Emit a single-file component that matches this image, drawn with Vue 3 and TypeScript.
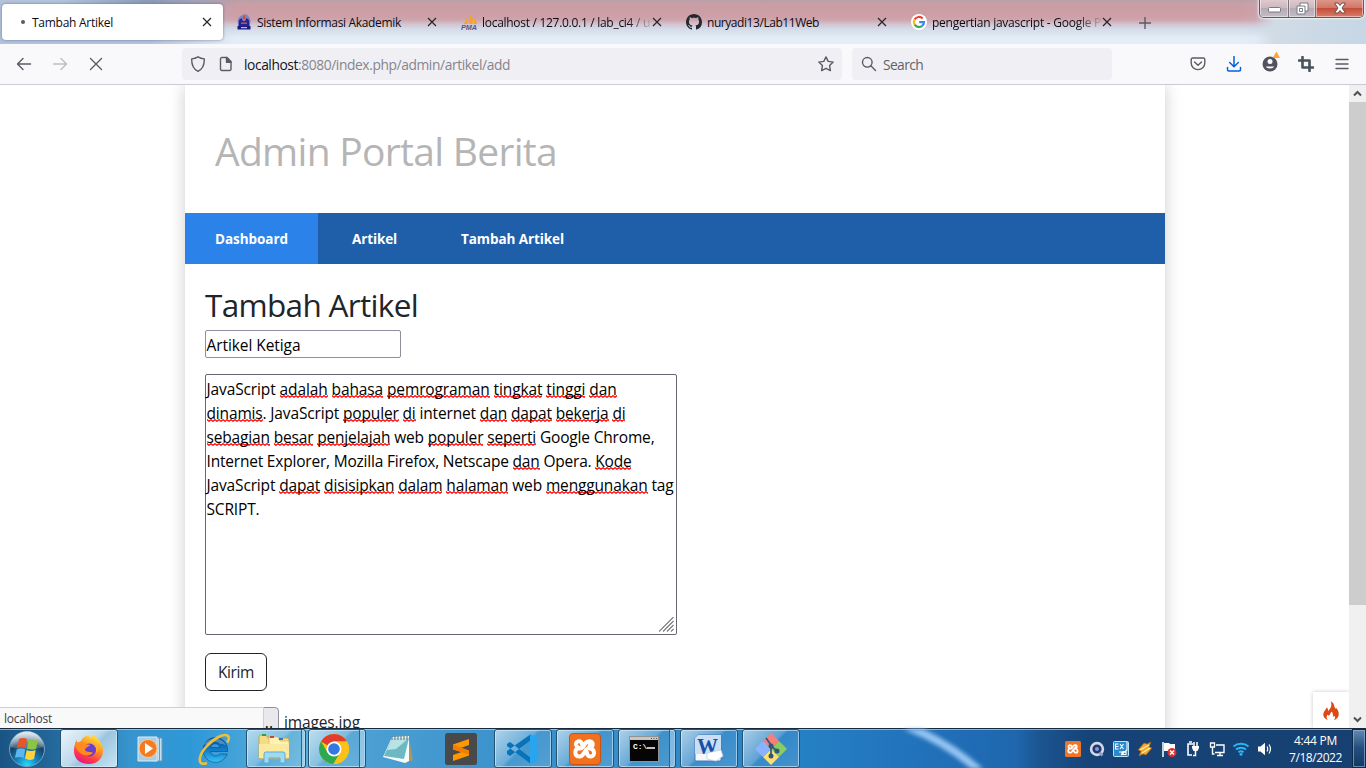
<script setup lang="ts">
import type { Directive } from 'vue'

interface Tab { id: string; title: string; width: number; fade?: boolean }
interface Piece { t: string; bad?: boolean }

const tabs: Tab[] = [
  { id: 'load', title: 'Tambah Artikel', width: 81 },
  { id: 'univ', title: 'Sistem Informasi Akademik', width: 144 },
  { id: 'pma', title: 'localhost / 127.0.0.1 / lab_ci4 / u', width: 168, fade: true },
  { id: 'github', title: 'nuryadi13/Lab11Web', width: 112 },
  { id: 'google', title: 'pengertian javascript - Google P', width: 169, fade: true },
]

const menu = [
  { label: 'Dashboard', width: 73 },
  { label: 'Artikel', width: 45 },
  { label: 'Tambah Artikel', width: 103 },
]

// Words between asterisks carry a spelling mark.
const parse = (line: string): Piece[] =>
  line.split('*').map((t, i) => ({ t, bad: i % 2 === 1 })).filter((p) => p.t !== '')

const lines = [
  { width: 410, text: 'JavaScript *adalah* *bahasa* *pemrograman* *tingkat* *tinggi* *dan*' },
  { width: 419, text: '*dinamis*. JavaScript *populer* *di* internet *dan* *dapat* *bekerja* *di*' },
  { width: 448, text: '*sebagian* *besar* *penjelajah* web *populer* *seperti* Google Chrome,' },
  { width: 425, text: 'Internet Explorer, Mozilla Firefox, Netscape *dan* Opera. *Kode*' },
  { width: 467, text: 'JavaScript *dapat* *disisipkan* *dalam* *halaman* web *menggunakan* tag' },
  { width: 53, text: 'SCRIPT.' },
].map((l) => ({ width: l.width, pieces: parse(l.text) }))

// Tracks text out so that it spans the given number of pixels.
const vFit: Directive<HTMLElement, number> = {
  mounted(el, { value }) {
    const n = (el.textContent ?? '').length
    el.style.letterSpacing = `${(value - el.getBoundingClientRect().width) / n}px`
  },
}
</script>

<template>
  <div class="screen">
    <header class="tabstrip">
      <div v-for="(tab, i) in tabs" :key="tab.id" class="tab" :class="{ active: i === 0 }">
        <div class="favicon">
          <i v-if="tab.id === 'load'" class="dot"></i>
          <svg v-else-if="tab.id === 'univ'" width="16" height="16" viewBox="0 0 16 16">
            <path d="M1.500 8C1.500 3 5 1.500 8 .5s6.500 2.500 6.500 7.500L13 13H3z" fill="#7d86c4" />
            <path d="M8 .5l1.500 3L8 6 6.500 3.500z" fill="#e2462e" />
            <path d="M3 6l2.500-2 1.300 3h2.400l1.300-3L13 6l.5 6h-11z" fill="#24248c" />
            <path d="M5 8.500h6v1.300H5z" fill="#d65b5b" />
            <path d="M1.500 12h13v3.500h-13z" fill="#1b1b84" /><path d="M5 13.200h6v1H5z" fill="#dfe1f6" />
          </svg>
          <svg v-else-if="tab.id === 'pma'" width="18" height="16" viewBox="0 0 18 16">
            <path d="M2 10c2.500-2 3.500-4 4-7 1.500 2 1.500 5 .5 7zM7.500 10C8.700 6.500 9 3 8.300.3c3.500 2 4.500 6 3.200 9.700zM12.500 10c.7-2 .7-3.500.3-5.500 2 1 3 3.500 3.200 5.500z" fill="#f8a12f" />
            <text x="0" y="15.500" class="pma-text" textLength="16" lengthAdjust="spacingAndGlyphs">PMA</text>
          </svg>
          <svg v-else-if="tab.id === 'github'" width="16" height="16" viewBox="0 0 16 16">
            <path fill="#24292f" d="M8 0C3.580 0 0 3.580 0 8c0 3.540 2.290 6.530 5.470 7.590.4.070.55-.17.55-.38 0-.19-.01-.82-.01-1.490-2.010.37-2.530-.49-2.690-.94-.09-.23-.48-.94-.82-1.130-.28-.15-.68-.52-.01-.53.63-.01 1.080.58 1.230.82.72 1.210 1.870.87 2.330.66.070-.52.28-.87.51-1.070-1.780-.2-3.640-.89-3.640-3.950 0-.87.31-1.590.82-2.150-.08-.2-.36-1.020.08-2.120 0 0 .67-.21 2.200.82.64-.18 1.320-.27 2-.27s1.360.09 2 .27c1.530-1.040 2.200-.82 2.200-.82.44 1.100.16 1.920.08 2.120.51.56.82 1.270.82 2.150 0 3.070-1.870 3.750-3.650 3.950.29.25.54.73.54 1.480 0 1.070-.01 1.930-.01 2.200 0 .21.15.46.55.38A8.010 8.010 0 0 0 16 8c0-4.420-3.580-8-8-8z" />
          </svg>
          <svg v-else width="16" height="16" viewBox="0 0 16 16">
            <circle cx="8" cy="8" r="8" fill="#fff" />
            <g fill="none" stroke-width="2.200">
              <path d="M3.700 5.400A5 5 0 0 1 11.700 4.600" stroke="#ea4335" />
              <path d="M3.700 5.400a5 5 0 0 0 0 5.200" stroke="#fbbc05" />
              <path d="M3.700 10.600a5 5 0 0 0 7.600 1.100" stroke="#34a853" />
              <path d="M11.300 11.700A5 5 0 0 0 13 8.100H8.200" stroke="#4285f4" />
            </g>
          </svg>
        </div>
        <div class="tab-title" :class="{ fade: tab.fade }"><span v-fit="tab.width">{{ tab.title }}</span></div>
        <svg class="close" width="10" height="10" viewBox="0 0 10 10"><path d="M1 1l8 8M9 1L1 9" /></svg>
      </div>
      <svg class="plus" width="12" height="12" viewBox="0 0 12 12"><path d="M6 0v12M0 6h12" /></svg>
      <div class="winbuttons">
        <div class="wb wb-min"><svg width="13" height="6"><rect x=".5" y=".5" width="12" height="4.500" rx="1" fill="#fff" stroke="#777b86" /></svg></div>
        <div class="wb wb-max">
          <svg width="13" height="13"><path d="M4 1h8v8h-3v3H1V4h3z" fill="#fff" stroke="#777b86" /><path d="M3.500 6.500h3v3h-3zM4 4h5v5" fill="none" stroke="#777b86" /></svg>
        </div>
        <div class="wb wb-close">
          <svg width="14" height="12" viewBox="0 0 14 12"><path d="M1.500 1h3.500l2 2.500L9 1h3.500L9 6l3.500 5H9L7 8.500 5 11H1.500L5 6z" fill="#fff" stroke="#684d50" /></svg>
        </div>
      </div>
    </header>

    <div class="toolbar">
      <div class="navbtns">
        <svg width="16" height="16" viewBox="0 0 16 16"><path d="M14.500 8H2M7 2.500L1.500 8 7 13.500" /></svg>
        <svg class="off" width="16" height="16" viewBox="0 0 16 16"><path d="M1.500 8H14M9 2.500L14.500 8 9 13.500" /></svg>
        <svg width="16" height="16" viewBox="0 0 16 16"><path d="M2.500 2.500l11 11M13.500 2.500l-11 11" /></svg>
      </div>
      <div class="urlbar">
        <svg width="16" height="16" viewBox="0 0 16 16"><path d="M8 .8c2 1.200 4 1.800 6.300 2.100C14.500 8.500 13 13 8 15.300 3 13 1.500 8.500 1.700 2.900 4 2.600 6 2 8 .8z" /></svg>
        <svg class="doc" width="16" height="16" viewBox="0 0 16 16"><path d="M3.800 1.500H9l4 4v7.700a1.300 1.300 0 0 1-1.300 1.300H3.800a1.300 1.300 0 0 1-1.300-1.300V2.800a1.300 1.300 0 0 1 1.300-1.300z" /><path d="M8.500 1.500v4.700H13z" fill="#5b5b66" /></svg>
        <span class="url"><span v-fit="54" class="host">localhost</span><span v-fit="212">:8080/index.php/admin/artikel/add</span></span>
        <svg class="star" width="16" height="16" viewBox="0 0 16 16"><path d="M8 .9l2.200 4.500 5 .7-3.600 3.500.8 5L8 12.300l-4.400 2.300.8-5L.8 6.100l5-.7z" /></svg>
      </div>
      <div class="search">
        <svg width="16" height="16" viewBox="0 0 16 16"><circle cx="6.300" cy="6.300" r="4.800" /><path d="M9.800 9.800l4.700 4.700" /></svg>
        <span v-fit="40">Search</span>
      </div>
      <div class="tools">
        <svg width="16" height="16" viewBox="0 0 16 16"><path d="M2.500 2h11A1.300 1.300 0 0 1 14.800 3.300v4a6.800 6.300 0 0 1-13.600 0v-4A1.300 1.300 0 0 1 2.500 2zM4.500 6L8 9.200 11.500 6" /></svg>
        <svg class="blue" width="16" height="16" viewBox="0 0 16 16"><path d="M8 .5v10M3.700 6.500L8 10.700l4.300-4.200M1.500 11.500v2a1.500 1.500 0 0 0 1.500 1.500h10a1.500 1.500 0 0 0 1.500-1.500v-2" /></svg>
        <svg width="20" height="22" viewBox="0 0 20 22"><circle cx="10" cy="13" r="7.500" fill="#52525e" stroke="none" /><circle cx="10" cy="10.500" r="2.500" fill="#f9f9fb" stroke="none" /><path d="M5.800 15.500h8.400c-1 2.500-7.400 2.500-8.400 0z" fill="#f9f9fb" stroke="none" /><path d="M16.500 .5l3.500 6.500h-7.500z" fill="#ffa436" stroke="none" /></svg>
        <svg width="16" height="16" viewBox="0 0 16 16"><path d="M4.500 1v10.500h10.500M1 4.500h10.500v10.500" stroke="#46535d" stroke-width="2.600" /></svg>
        <svg width="16" height="16" viewBox="0 0 16 16"><path d="M2 3.500h12M2 8h12M2 12.500h12" /></svg>
      </div>
    </div>

    <div class="viewport">
      <main class="page">
        <div class="page-head"><h1><span v-fit="342">Admin Portal Berita</span></h1></div>
        <nav class="menu">
          <a v-for="(m, i) in menu" :key="m.label" :class="{ on: i === 0 }"><span v-fit="m.width">{{ m.label }}</span></a>
        </nav>
        <section class="form">
          <h2><span v-fit="213">Tambah Artikel</span></h2>
          <div class="field"><span v-fit="94">Artikel Ketiga</span></div>
          <div class="area">
            <div v-for="(l, i) in lines" :key="i" class="line"><span v-fit="l.width"><span v-for="(p, j) in l.pieces" :key="j" :class="{ bad: p.bad }">{{ p.t }}</span></span></div>
            <svg class="grip" width="15" height="15" viewBox="0 0 15 15"><path d="M0 14.500L14.500 0M4 14.500L14.500 4M8 14.500L14.500 8M12 14.500l2.500-2.500" /></svg>
          </div>
          <button class="send"><span v-fit="36">Kirim</span></button>
          <div class="file"><span class="browse">Browse...</span><span v-fit="76">images.jpg</span></div>
        </section>
      </main>
      <div class="scroll">
        <svg width="17" height="17" viewBox="0 0 17 17"><path d="M5 10.500L8.500 7l3.500 3.500" /></svg>
        <div class="thumb"></div>
        <svg width="17" height="17" viewBox="0 0 17 17"><path d="M5 6.500L8.500 10 12 6.500" /></svg>
      </div>
      <div class="flame">
        <svg width="16" height="20" viewBox="0 0 16 20"><path fill="#dd4814" d="M5 19.300C1.500 18 0 15.500.3 13 .7 10 3 9 3.700 6.600c1.300 1 1.500 2.300 1.200 3.600C7.500 7.500 9.500 4.500 7.700.3c3.700 1.700 3.300 4.500 4.300 7 .4.700 1 .2.800-.8 2.700 2.800 4 6.500 2 9.800-.8 1.400-2.300 2.500-4 3 1.500-1.500 1.800-3 .8-4.500-.3.800-.9 1-1.500.8.400-2-1-3.200-.9-5.100C6.700 11.500 8 13.500 6 14.500c-.8.300-1.300-.3-1.400-1-1.300 1.800-1.300 4 .4 5.800z" /></svg>
      </div>
      <div class="status"><span v-fit="48">localhost</span></div>
    </div>

    <footer class="taskbar">
      <svg class="sweep" width="120" height="40" viewBox="0 0 120 40"><path d="M8 -3Q52 14 86 46" /></svg>
      <div class="slot start">
        <svg width="38" height="38" viewBox="0 0 38 38">
          <defs>
            <radialGradient id="orb" cx=".5" cy=".95" r=".9"><stop offset="0" stop-color="#22dcff" /><stop offset=".35" stop-color="#1680bb" /><stop offset=".7" stop-color="#16405f" /><stop offset="1" stop-color="#8eaabf" /></radialGradient>
            <linearGradient id="gloss" x1="0" y1="0" x2="0" y2="1"><stop offset="0" stop-color="#fff" stop-opacity=".75" /><stop offset="1" stop-color="#fff" stop-opacity=".12" /></linearGradient>
          </defs>
          <circle cx="19" cy="19" r="17.500" fill="url(#orb)" stroke="#6fa5c6" />
          <path d="M2.500 17a16.500 15.500 0 0 1 33 0q-16 5-33 0z" fill="url(#gloss)" />
          <path d="M11 9q4-2 8 0l-1.500 9q-4-2-8.500 0z" fill="#e8552a" />
          <path d="M20.500 9.500q4 2 9.500 0L28 19q-5 1.500-9-.5z" fill="#8cc63f" />
          <path d="M8.700 19.500q4-2 8.500 0l-1.700 8.500q-4-2-8.500 0z" fill="#5cb7f0" />
          <path d="M18.700 20q4 2 9 0L26 29q-5 2-9-.5z" fill="#ffd13b" />
        </svg>
      </div>
      <div class="slot task lit">
        <svg width="32" height="32" viewBox="0 0 32 32">
          <defs><linearGradient id="fox" x1=".8" y1="0" x2=".3" y2="1"><stop offset="0" stop-color="#fff14a" /><stop offset=".4" stop-color="#ff9a22" /><stop offset=".75" stop-color="#ff3b4b" /><stop offset="1" stop-color="#e31587" /></linearGradient></defs>
          <path d="M3.500 7l1 3 3-1.500c2-4 5-6 8-6l2.500 3C19 3 19.500 1.500 20 1c2 3 6 5 8 9 5 8 1 21-12 21C5 31 1 24 1 18c0-4 1-8 2.500-11z" fill="url(#fox)" />
          <circle cx="16.500" cy="17" r="6.500" fill="#6a3fd0" />
          <path d="M2 12c3-4 7-4 10-1 2 .5 4 .3 5 1-1 2-5 2-5 5 2 3 6 1 8 3-5 5-15 2-18-8z" fill="#ff8a1f" />
          <path d="M21 11c2 2 3 5 2 9 4-3 3-9-2-9z" fill="#ffb02c" />
        </svg>
      </div>
      <div class="slot wide player">
        <svg width="30" height="26" viewBox="0 0 30 26"><path d="M16 2h9v23h-9z" fill="#c4e0ef" stroke="#6f9cb8" /><path d="M20 2v23M22.500 2v23" stroke="#6f9cb8" /><path d="M1 1h19v24H1z" fill="#a8cee3" stroke="#dcedf6" /><circle cx="11" cy="12.500" r="9" fill="#f47b20" stroke="#ffc894" /><path d="M8 7l8 5.500L8 18z" fill="#fff" /></svg>
      </div>
      <div class="slot wide">
        <svg width="34" height="32" viewBox="0 0 34 32">
          <defs><linearGradient id="ie" x1="0" y1="0" x2="0" y2="1"><stop offset="0" stop-color="#0a4f95" /><stop offset=".5" stop-color="#0f7dcb" /><stop offset="1" stop-color="#36c5f7" /></linearGradient></defs>
          <path d="M18 4.500a12.500 12.500 0 1 0 12.300 16.500h-7.300c-2.500 3.500-9 2.500-9.500-2.500h17.200C31 10.500 26 4.500 18 4.500zM13.600 14.500c1-5 8.400-5 9.200 0z" fill="url(#ie)" stroke="#0b4a85" stroke-width=".6" />
          <path d="M7 12c2-4 6-6.500 11-6.500 5 0 9 2.500 11 7-2-1.500-4-2-6-1.500-2-3-7-3-9 0-2 0-5 0-7 1z" fill="#fff" opacity=".28" />
          <path d="M10 30C0 34 1 23 9 14 17 5 27 0 31 3c1.500 1.500.8 4-.8 6.500" fill="none" stroke="#f4bd33" stroke-width="2.600" />
        </svg>
      </div>
      <div class="slot task stack two">
        <svg width="34" height="32" viewBox="0 0 34 32"><path d="M2 4q0-2 2-2h5l2 3h19q2 0 2 2v17q0 2-2 2H4q-2 0-2-2z" fill="#f4dc83" stroke="#c3a54d" /><path d="M12 4h9l2 4h9v4H12z" fill="#fff2b5" stroke="#d1b764" stroke-width=".7" /><path d="M2 11h30v14H2z" fill="#fbe9a0" /><path d="M5 1h4v2H5z" fill="#22a545" /><path d="M13 3h4v2h-4z" fill="#db3d31" /><path d="M22 5h4v2h-4z" fill="#3677cb" /><path d="M7 30V21q0-2 2-2h17q2 0 2 2v9h-5v-5H12v5z" fill="#9edaf3" stroke="#63a9cf" /></svg>
      </div>
      <div class="slot task stack three">
        <svg width="32" height="32" viewBox="0 0 32 32"><circle cx="16" cy="16" r="15" fill="#fbc116" /><path d="M16 16L3 8.500A15 15 0 0 1 29 8.500H16z" fill="#e33b2e" /><path d="M3 8.500A15 15 0 0 0 15.500 31L22 19.500 9.500 19.500z" fill="#2da94f" /><path d="M29 8.500H16l6.500 11L15.500 31A15 15 0 0 0 29 8.500z" fill="#fbc116" /><circle cx="16" cy="16" r="7.500" fill="#fff" /><circle cx="16" cy="16" r="5.800" fill="#3478e5" /></svg>
      </div>
      <div class="slot wide">
        <svg width="32" height="32" viewBox="0 0 32 32"><path d="M27 5l4 22-7 3z" fill="#a99767" /><path d="M10 4l17-1v25l-4 2L1 24z" fill="#f5fafa" /><path d="M10 5h17l-5 21L2 23z" fill="#6db9c3" /><path d="M10 5h17L14 16 5 17z" fill="#b8e3e5" /><path d="M10 3v4M13 3v4M16 3v4M19 3v4M22 3v4M25 3v4" stroke="#777f84" stroke-width="1.200" /></svg>
      </div>
      <div class="slot sublime">
        <svg width="32" height="32" viewBox="0 0 32 32"><rect width="32" height="32" rx="2.500" fill="#494949" /><path d="M8 11.500L24 6v6l-8.500 3L24 17.500v5L8 28v-6l8.500-3L8 16.500z" fill="#ff9800" /><path d="M8 11.500l16 6v4L8 16.500z" fill="#f07c00" /></svg>
      </div>
      <div class="slot task">
        <svg width="34" height="32" viewBox="0 0 34 32"><path d="M1 11l3-2 21 16v6L1 13zM1 21l3 2L25 7V1L1 18z" fill="#0873ba" /><path d="M24 1l8 3.500v23L24 31z" fill="#27a5ef" /></svg>
      </div>
      <div class="slot task gap">
        <svg width="32" height="32" viewBox="0 0 32 32"><rect x=".5" y=".5" width="31" height="31" rx="3.500" fill="#f2711f" stroke="#c7540f" /><path d="M13 11.500c0-4.500-6.500-4-6 0 .3 2 2 2.500 2.500 3.500-4 1-4.500 8 .5 8.500 5 .5 5-6 8-7.500 2-1 3-2 3-4.500M9 15.500c4 .5 5-1.500 6-3 1.500-4.500 7-5.500 8.500-2.500 1 2.500-.5 4-2.500 5.500 5 .5 5.500 7.500 1 8-3.500.3-4-2.500-4-4" fill="none" stroke="#fff" stroke-width="4" stroke-linejoin="round" stroke-linecap="round" /></svg>
      </div>
      <div class="slot task stack three gap">
        <svg width="30" height="26" viewBox="0 0 30 26"><rect x=".5" y=".5" width="29" height="25" fill="#050505" stroke="#929292" /><path d="M1 1h28v3H1z" fill="#c6c6c6" /><path d="M22 2.500h1M24.500 2.500h1M27 2.500h1" stroke="#555" /><text x="4" y="12.500" class="cmd-text">C:\</text><path d="M18 12h8" stroke="#fff" stroke-width="1.500" /></svg>
      </div>
      <div class="slot task gap">
        <svg width="32" height="32" viewBox="0 0 32 32"><path d="M5 2h23v26H2V5z" fill="#f4f8fc" stroke="#4a78b8" /><path d="M5 2h23v19H2V5z" fill="#cadff5" /><text x="4" y="21" class="word-text" textLength="21" lengthAdjust="spacingAndGlyphs">W</text><path d="M14 20l14-3 2 6-7 5-9-2z" fill="#fff" stroke="#b9cbe0" stroke-width=".7" /></svg>
      </div>
      <div class="slot task gap">
        <svg width="34" height="34" viewBox="0 0 34 34"><path d="M17 1l8 8-8 8-8-8z" fill="#f77f7b" /><path d="M25 9l8 8-8 8-8-8z" fill="#8acb62" /><path d="M17 17l8 8-8 8-8-8z" fill="#ffdf70" /><path d="M9 9l8 8-8 8-8-8z" fill="#8ab2ff" /><path d="M12 6l5 7v12M17 14l6 5" fill="none" stroke="#2e5878" stroke-width="1.700" /><circle cx="17" cy="14" r="2.500" fill="#2e5878" /><circle cx="23" cy="19" r="2.500" fill="#2e5878" /><circle cx="17" cy="24" r="2.500" fill="#2e5878" /></svg>
      </div>

      <div class="tray">
        <svg width="16" height="16" viewBox="0 0 32 32"><rect width="32" height="32" rx="3" fill="#ef7425" /><path d="M13 11.500c0-4.500-6.500-4-6 0 .3 2 2 2.500 2.500 3.500-4 1-4.500 8 .5 8.500 5 .5 5-6 8-7.500 2-1 3-2 3-4.500M9 15.500c4 .5 5-1.500 6-3 1.500-4.500 7-5.500 8.500-2.500 1 2.500-.5 4-2.500 5.500 5 .5 5.500 7.500 1 8-3.500.3-4-2.500-4-4" fill="none" stroke="#fff" stroke-width="3.500" stroke-linejoin="round" stroke-linecap="round" /></svg>
        <svg width="16" height="16" viewBox="0 0 16 16"><circle cx="8" cy="8" r="5.900" fill="#26386f" stroke="#d3dae8" stroke-width="2.600" /><circle cx="8" cy="8" r="2" fill="#7c9de1" /><path d="M10.500 11.500l3 3" stroke="#8fa1c6" stroke-width="2.500" /></svg>
        <svg width="16" height="16" viewBox="0 0 16 16"><rect x=".5" y=".5" width="15" height="15" rx="1" fill="#278ace" stroke="#b5e5fc" /><path d="M5.500 3H2.500v5h3M2.500 5.500h3M7 3l3.500 5M10.500 3L7 8M14 1v8l-6 5M6 11h3v3M10 10.500h3v3h-3z" fill="none" stroke="#fff" stroke-width="1.100" /></svg>
        <svg width="16" height="16" viewBox="0 0 16 16"><path d="M1 9l6-7 3 1 4-2-2 5 3 1-6 7-3-1-4 2 2-5z" fill="#f4a72c" stroke="#a95e10" stroke-width=".7" /><path d="M3 9l9-5M5 12l8-5" stroke="#fff0ad" stroke-width="1.300" /></svg>
        <svg width="16" height="16" viewBox="0 0 16 16"><path d="M2 1v15" stroke="#fff" stroke-width="1.500" /><path d="M3 2h5l1 1h5v7H3z" fill="#fff" /><circle cx="11" cy="11.500" r="4.500" fill="#dc2f2f" /><path d="M9 9.500l4 4M13 9.500l-4 4" stroke="#fff" stroke-width="1.500" /></svg>
        <svg width="16" height="16" viewBox="0 0 16 16"><path d="M8 3H3v11h4M4 1h3" fill="none" stroke="#fff" stroke-width="1.600" /><path d="M9 1v4M12 1v4" stroke="#fff" stroke-width="1.500" /><path d="M7 5h7v2l-1.500 3h-4L7 7z" fill="#fff" /><path d="M10.500 10v4.500H8" fill="none" stroke="#fff" stroke-width="1.500" /></svg>
        <svg width="16" height="16" viewBox="0 0 16 16"><path d="M7 4h8v7.500H6M8 14.500h6M11 12v2M3.500 6v7h2" fill="none" stroke="#fff" stroke-width="1.400" /><path d="M1.500 2h4v4h-4z" fill="none" stroke="#fff" stroke-width="1.300" /></svg>
        <svg width="18" height="16" viewBox="0 0 18 16"><path d="M1.500 5.500a10.500 9 0 0 1 15 0M4 8.500a7 6 0 0 1 10 0M6.500 11.300a3.500 3 0 0 1 5 0" fill="none" stroke="#28b5f5" stroke-width="1.900" /><circle cx="9" cy="13.300" r="1.500" fill="#28b5f5" /></svg>
        <svg width="16" height="16" viewBox="0 0 16 16"><path d="M1 5.500h2.500L8 1.800v12.400l-4.500-3.700H1z" fill="#fff" /><path d="M10 5.500q1.500 2.500 0 5M12 3.500q3 4.500 0 9" fill="none" stroke="#fff" stroke-width="1.200" /></svg>
      </div>
      <div class="clock"><span v-fit="43">4:44 PM</span><span v-fit="53">7/18/2022</span></div>
      <div class="peek"></div>
    </footer>
  </div>
</template>

<style>
html, body { margin: 0; overflow: hidden; }
</style>

<style scoped>
.screen { width: 1366px; height: 768px; display: flex; flex-direction: column; overflow: hidden; font-family: "Open Sans", "Noto Sans", sans-serif; background: #fff; color: #212529; }
.screen * { box-sizing: border-box; }
svg { display: block; flex: none; }
span { white-space: pre; }

.tabstrip { height: 44px; flex: none; position: relative; display: flex; align-items: flex-start; padding-top: 4px; background:
  radial-gradient(ellipse 90px 22px at 150px 0, rgba(120,135,165,.7), transparent),
  linear-gradient(90deg, #b4c3dc 0, #b4c3dc 150px, rgba(190,205,224,0) 235px, rgba(190,205,224,0) 1240px, rgba(190,210,228,.6) 1366px),
  linear-gradient(90deg, transparent 1255px, #d4dde6 1275px),
  linear-gradient(#b6a0a8 0, #c99da5 3px, #cd9ea6 15px, #cfa5ae 20px, #d2c3cf 24px, #d3dce8 29px, #e2edf7 38px, #e3eef9 44px); }
.tab { width: 221px; height: 36px; margin: 0 2px; border-radius: 4px; display: flex; align-items: center; padding-left: 9px; position: relative; }
.tab.active { background: #fff; box-shadow: 0 0 3px rgba(60,70,100,.6); }
.favicon { width: 21px; display: flex; }
.dot { width: 4px; height: 4px; border-radius: 50%; background: #5b5b66; margin-left: 10px; }
.tab-title { flex: none; width: 171px; font-size: 12px; line-height: 20px; color: #0c0c12; overflow: hidden; padding-top: 1px; }
.tab-title.fade { mask-image: linear-gradient(90deg, #000 145px, transparent 171px); }
.tab-title span { display: inline-block; }
.close { position: absolute; right: 11px; top: 13px; stroke: #25252b; stroke-width: 1.200; fill: none; }
.plus { margin: 13px 0 0 14px; stroke: #5b5b66; stroke-width: 1.400; }
.winbuttons { position: absolute; right: 2px; top: -1px; width: 105px; height: 19px; display: flex; border: 1px solid #5f5a65; border-top: 0; border-radius: 0 0 5px 5px; overflow: hidden; box-shadow: 0 0 2px 1px rgba(255,255,255,.7); }
.wb { display: flex; align-items: center; justify-content: center; background: linear-gradient(#e2cbd0, #cdb8bf 48%, #b5a9b3 50%, #c3bdc7); box-shadow: inset 0 0 0 1px rgba(255,255,255,.45); border-right: 1px solid #77717c; }
.wb-min { width: 29px; padding-top: 4px; }
.wb-max { width: 27px; }
.wb-close { flex: 1; border: 0; background: linear-gradient(#df9a8d, #d17768 48%, #c14c38 50%, #dd7c68); }

.toolbar { height: 41px; flex: none; background: #f9f9fb; border-bottom: 1px solid #ccccd0; display: flex; align-items: center; }
.toolbar svg { fill: none; stroke: #5b5b66; stroke-width: 1.400; stroke-linejoin: round; stroke-linecap: round; }
.navbtns { display: flex; gap: 20px; width: 182px; padding-left: 16px; }
.toolbar .off { stroke: #bebec4; }
.urlbar { width: 660px; height: 32px; background: #f0f0f4; border-radius: 4px; display: flex; align-items: center; padding: 0 8px; }
.doc { margin-left: 12px; }
.url { margin-left: 10px; font-size: 13.800px; line-height: 20px; color: #85858e; display: flex; padding-top: 1px; }
.host { color: #15141a; }
.star { margin-left: auto; }
.search { width: 260px; height: 32px; margin-left: 10px; background: #f0f0f4; border-radius: 4px; display: flex; align-items: center; padding-left: 9px; font-size: 13.800px; color: #62626b; }
.search span { margin: 1px 0 0 6px; }
.tools { flex: 1; display: flex; align-items: center; justify-content: flex-end; gap: 20px; padding-right: 16px; }
.tools svg:nth-child(3) { margin: -5px -2px 0; }
.toolbar .blue { stroke: #0061e0; stroke-width: 1.500; }

.viewport { flex: 1; min-height: 0; position: relative; overflow: hidden; display: flex; justify-content: space-between; background: #fff; }
.page { width: 980px; height: 700px; margin-left: 185px; background: #fff; box-shadow: 0 0 16px rgba(0,0,0,.2); }
.page-head { height: 128px; padding: 4px 30px 0; display: flex; align-items: center; }
h1, h2 { margin: 0; font-weight: 400; }
h1 { font-size: 39px; line-height: 48px; color: #b5b5b5; }
h1 span, h2 span { display: inline-block; }
.menu { height: 51px; display: flex; background: #1f5faa; color: #fff; font-size: 13.500px; font-weight: 700; }
.menu a { padding: 0 30px; display: flex; align-items: center; margin-right: 4px; }
.menu a.on { background: #2b83ea; }
.form { padding: 17px 20px 0; font-size: 15.500px; display: flex; flex-direction: column; align-items: flex-start; }
h2 { font-size: 31.500px; line-height: 48px; height: 49px; }
.field { width: 196px; height: 28px; border: 1px solid #8f8f9d; border-radius: 2px; padding: 2px .5px 0; line-height: 24px; color: #000; display: flex; align-items: center; }
.area { position: relative; width: 472px; height: 261px; margin-top: 16px; border: 1px solid #676774; border-radius: 2px; padding: 2px .5px; color: #000; }
.line { height: 24px; line-height: 24px; display: flex; }
.bad { background: url("data:image/svg+xml,%3Csvg xmlns='http://www.w3.org/2000/svg' width='4' height='3'%3E%3Cpath d='M-1 1.500L0 .7 2 2.300 4 .7 5 1.500' fill='none' stroke='red' stroke-width='1.200'/%3E%3C/svg%3E") 0 17px / 4px 3px repeat-x; }
.grip { position: absolute; right: 2px; bottom: 2px; stroke: #777; stroke-width: 1.100; }
.send { width: 62px; height: 38px; margin-top: 18px; border: 1px solid #212529; border-radius: 6px; background: #fff; color: #212529; font: inherit; padding: 0; }
.send span { display: inline-block; }
.file { margin-top: 16px; height: 30px; display: flex; align-items: center; gap: 5px; }
.browse { width: 74px; height: 30px; border: 1px solid #8f8f9d; border-radius: 4px; background: #e9e9ed; color: #000; text-align: right; padding-right: 5px; line-height: 28px; }
.scroll { width: 17px; display: flex; flex-direction: column; background: #f0f0f0; }
.scroll svg { fill: none; stroke: #505050; stroke-width: 2; }
.thumb { height: 503px; background: #cdcdcd; margin-bottom: auto; }
.flame { position: absolute; left: 1313px; bottom: 0; width: 36px; height: 36px; background: #fff; box-shadow: 0 0 4px rgba(0,0,0,.22); clip-path: inset(-6px 0 0 -6px); padding: 9px 0 0 10px; }
.status { position: absolute; left: 0; bottom: 0; width: 264px; height: 21px; background: #f9f9fa; border: 1px solid #cfcfd3; border-width: 1px 1px 0 0; padding-left: 4px; font-size: 12px; line-height: 22px; color: #3d3d44; display: flex; }

.taskbar { height: 40px; flex: none; position: relative; display: flex; border-top: 1px solid #16293d; box-shadow: inset 0 1px rgba(190,220,245,.65); background: linear-gradient(90deg, #1a5484 0, #236699 50px, #3794ce 130px, #2e98d7 190px, #5fb0d9 300px, #4b9fd2 370px, #3b93cd 500px, #348cc9 640px, #2680c4 800px, #2173bb 910px, #1f67af 1015px, #1b5590 1040px, #164378 1090px, #164071 1366px); }
.slot { position: relative; display: flex; align-items: center; justify-content: center; flex: none; height: 39px; }
.start { width: 60px; padding-right: 6px; }
.wide { width: 64px; }
.player { padding-left: 4px; }
.sublime { width: 64px; padding-right: 2px; }
.task { width: 58px; border: 1px solid #235273; border-radius: 3px; background: linear-gradient(135deg, rgba(255,255,255,.6), rgba(255,255,255,.26) 45%, rgba(255,255,255,.06) 50%, rgba(255,255,255,.14)); box-shadow: inset 0 0 0 1px rgba(220,240,255,.6); }
.lit { background: linear-gradient(135deg, #ecf5fb, #bdd9ea 45%, #9bc5df 55%, #c8e3f2); }
.gap { margin-left: 4px; }
.stack { padding-right: 4px; }
.stack::after { content: ""; position: absolute; right: 1px; top: 0; bottom: 0; width: 2px; border-left: 1px solid #2c6389; background: rgba(220,240,255,.4); }
.two { width: 60px; }
.three { margin-left: 2px; padding-right: 7px; }
.three::after { width: 4px; }
.three.gap { margin-left: 4px; }
.sweep { position: absolute; left: 898px; top: 0; fill: none; stroke: #9ccaf5; stroke-width: 8; filter: blur(2px); opacity: .95; }
.tray { position: absolute; left: 1065px; top: 12px; display: flex; gap: 8px; }
.tray svg:nth-child(8) { margin: 0 -1px; }
.clock { position: absolute; left: 1276px; top: 3px; width: 79px; display: flex; flex-direction: column; align-items: center; color: #fff; font-size: 12px; line-height: 17px; }
.peek { width: 14px; margin-left: auto; border: 1px solid #0e2845; box-shadow: inset 0 0 0 1px rgba(150,190,225,.6); background: linear-gradient(#6489ae, #234f80 48%, #123961); }
.pma-text { font: italic 700 7px "Liberation Sans", sans-serif; fill: #55558a; }
.cmd-text { font: 700 8px "Liberation Mono", monospace; fill: #fff; }
.word-text { font: 700 23px "Liberation Serif", serif; fill: #1751a6; }
</style>
